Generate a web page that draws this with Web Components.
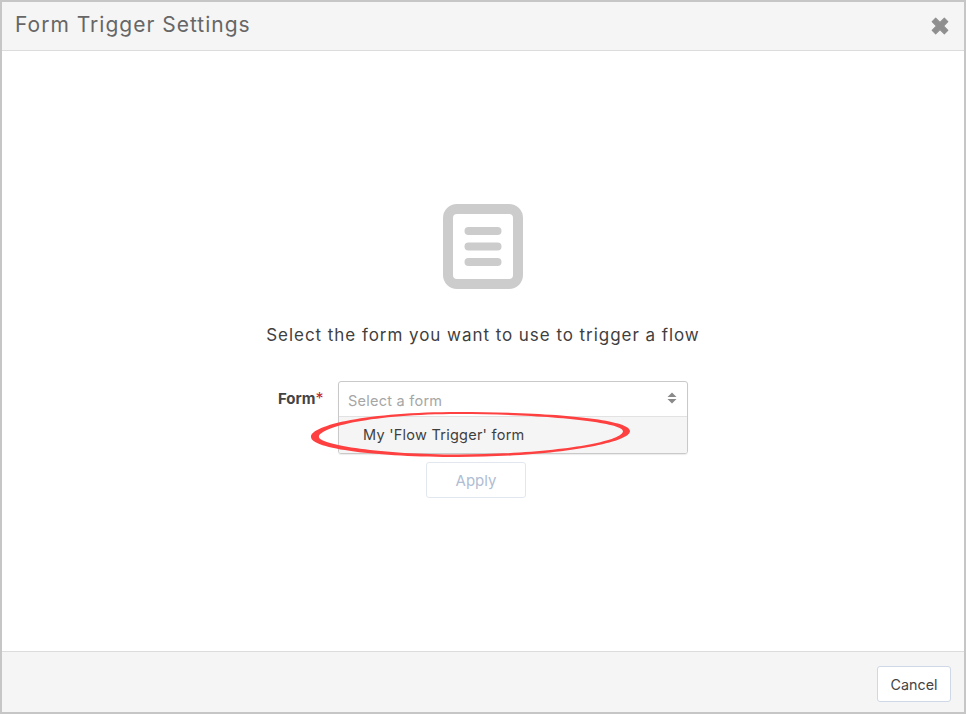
<!DOCTYPE html>
<html>
<head>
<meta charset="utf-8">
<title>Form Trigger Settings</title>
<style>
    html, body { margin: 0; height: 100%; }
    body { font-family: "Inter", "Liberation Sans", sans-serif; color: #3a3a3a; }
</style>
</head>
<body>
<settings-modal heading="Form Trigger Settings">
    <form-picker
        prompt="Select the form you want to use to trigger a flow"
        label="Form"
        placeholder="Select a form"
        option="My 'Flow Trigger' form"></form-picker>
    <modal-button slot="footer">Cancel</modal-button>
</settings-modal>

<script>
class SettingsModal extends HTMLElement {
    constructor() {
        super();
        this.attachShadow({ mode: 'open' });
        this.shadowRoot.innerHTML = `
            <style>
                :host {
                    display: flex;
                    flex-direction: column;
                    box-sizing: border-box;
                    width: 966px;
                    height: 714px;
                    border: 2px solid #c6c6c6;
                    background: #fff;
                }
                header {
                    display: flex;
                    justify-content: space-between;
                    align-items: center;
                    box-sizing: border-box;
                    height: 49px;
                    padding: 0 14px 0 13px;
                    background: #f5f5f5;
                    border-bottom: 1px solid #dcdcdc;
                }
                h1 {
                    margin: 0 0 4px;
                    font-size: 21px;
                    font-weight: 400;
                    letter-spacing: 1px;
                    color: #666;
                }
                svg { display: block; }
                main { flex: 1; display: flex; justify-content: center; }
                footer {
                    display: flex;
                    justify-content: flex-end;
                    align-items: center;
                    box-sizing: border-box;
                    height: 61px;
                    padding: 4px 13px 0 0;
                    background: #f5f5f5;
                    border-top: 1px solid #dcdcdc;
                }
            </style>
            <header>
                <h1>${this.getAttribute('heading')}</h1>
                <svg width="20" height="20" viewBox="0 0 20 20">
                    <path d="M4.200 6.800 6.800 4.200 10 7.400 13.200 4.200 15.800 6.800 12.600 10 15.800 13.200 13.200 15.800 10 12.600 6.800 15.800 4.200 13.200 7.400 10Z"
                        transform="translate(10 10) scale(1.35) translate(-10 -10)"
                        fill="#8f8f8f" stroke="#8f8f8f" stroke-width="0.8" stroke-linejoin="round"/>
                </svg>
            </header>
            <main><slot></slot></main>
            <footer><slot name="footer"></slot></footer>
        `;
    }
}

class ModalButton extends HTMLElement {
    constructor() {
        super();
        this.attachShadow({ mode: 'open' });
        this.shadowRoot.innerHTML = `
            <style>
                :host {
                    display: flex;
                    justify-content: center;
                    align-items: center;
                    box-sizing: border-box;
                    width: 74px;
                    height: 36px;
                    border: 1px solid #cfd8e6;
                    border-radius: 3px;
                    background: #fff;
                    font-size: 14.3px;
                    color: #444;
                }
                :host([disabled]) {
                    width: 100px;
                    border-color: #e2e7ef;
                    color: #b0bdd3;
                    font-size: 15px;
                }
            </style>
            <slot></slot>
        `;
    }
}

class FormPicker extends HTMLElement {
    constructor() {
        super();
        this.attachShadow({ mode: 'open' });
        this.shadowRoot.innerHTML = `
            <style>
                :host {
                    display: flex;
                    flex-direction: column;
                    align-items: center;
                    padding-top: 153px;
                }
                svg { display: block; }
                p {
                    margin: 33px 0 0;
                    font-size: 17px;
                    line-height: 26px;
                    letter-spacing: 0.95px;
                    color: #3f3f3f;
                    white-space: nowrap;
                }
                .row {
                    position: relative;
                    display: grid;
                    grid-template-columns: 60px 350px;
                    margin-top: 33px;
                }
                label {
                    font-size: 15px;
                    font-weight: 700;
                    color: #444;
                    padding-top: 8px;
                    line-height: 18px;
                }
                label span {
                    color: #c0272d;
                    font-size: 16px;
                    font-weight: 400;
                }
                .select {
                    box-sizing: border-box;
                    height: 73px;
                    border: 1px solid #c9c9c9;
                    border-radius: 3px;
                    box-shadow: 0 1px 1px rgba(0,0,0,.08);
                    overflow: hidden;
                }
                .input {
                    display: flex;
                    justify-content: space-between;
                    align-items: center;
                    box-sizing: border-box;
                    height: 35px;
                    padding: 3px 10px 0 9px;
                    border-bottom: 1px solid #e2e2e2;
                    font-size: 14.5px;
                    letter-spacing: 0.25px;
                    color: #a6a6a6;
                }
                .input svg { margin-top: -5px; }
                .option {
                    box-sizing: border-box;
                    height: 36px;
                    padding: 9px 0 0 24px;
                    line-height: 18px;
                    font-size: 14.5px;
                    letter-spacing: 0.25px;
                    background: #f5f5f5;
                    color: #3f3f3f;
                }
                modal-button { grid-column: 2; margin: 8px 0 0 88px; }
                .mark { position: absolute; left: 30px; top: 28px; }
            </style>
            <svg width="80" height="85" viewBox="0 0 80 85">
                <rect x="5" y="5" width="70" height="75" rx="9" fill="none" stroke="#cccccc" stroke-width="10"/>
                <g fill="#cccccc">
                    <rect x="21.5" y="23" width="37" height="8" rx="4"/>
                    <rect x="21.5" y="38.500" width="37" height="8" rx="4"/>
                    <rect x="21.5" y="54" width="37" height="8" rx="4"/>
                </g>
            </svg>
            <p>${this.getAttribute('prompt')}</p>
            <div class="row">
                <label>${this.getAttribute('label')}<span>*</span></label>
                <div class="select">
                    <div class="input">
                        <span>${this.getAttribute('placeholder')}</span>
                        <svg width="10" height="12" viewBox="0 0 10 12">
                            <path d="M5 0.500 9.500 5H0.500ZM0.500 7H9.500L5 11.500Z" fill="#8a8a8a"/>
                        </svg>
                    </div>
                    <div class="option">${this.getAttribute('option')}</div>
                </div>
                <modal-button disabled>Apply</modal-button>
                <svg class="mark" width="324" height="52" viewBox="0 0 324 52">
                    <path fill="#ff4040" fill-rule="evenodd" d="M3 28C3 16 60 3 150 3 240 3 322 10 322 22 322 35 240 48 150 48 70 48 3 40 3 28Z
                        M11 28C11 36 75 45.500 150 45.500 235 45.500 315 34 315 22 315 13 235 5 150 5 65 5 11 18 11 28Z"/>
                </svg>
            </div>
        `;
    }
}

customElements.define('modal-button', ModalButton);
customElements.define('form-picker', FormPicker);
customElements.define('settings-modal', SettingsModal);
</script>
</body>
</html>
